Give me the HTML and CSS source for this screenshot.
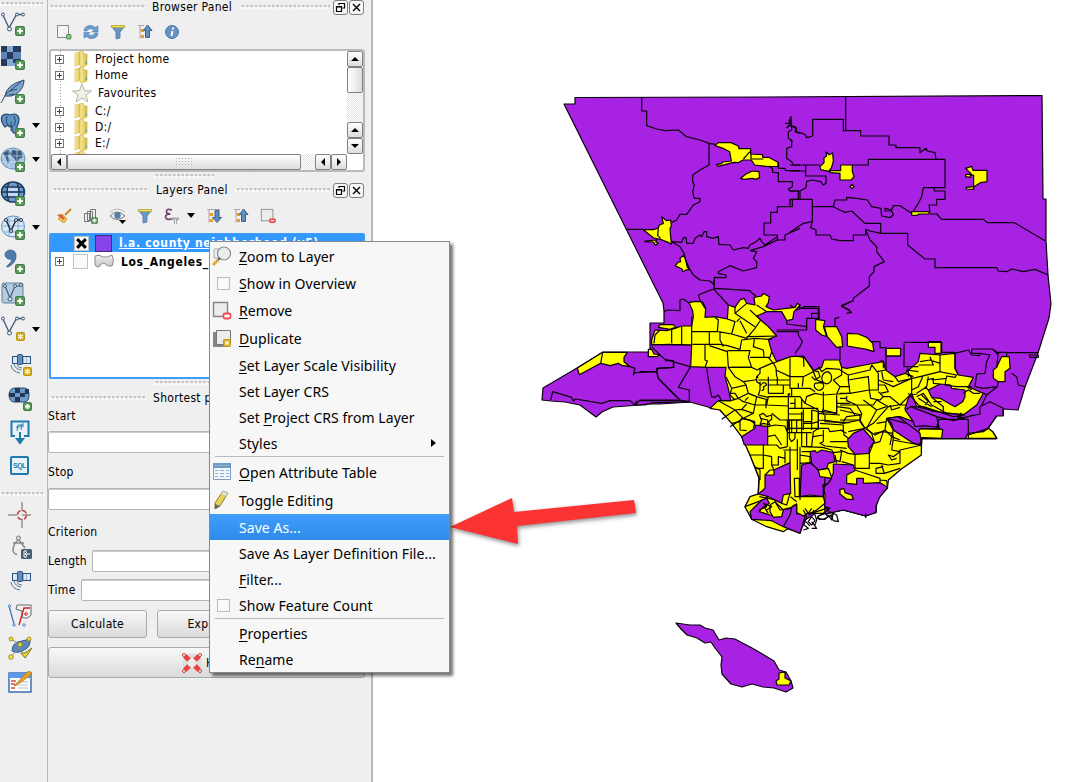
FILE: index.html
```html
<!DOCTYPE html>
<html lang="en">
<head>
<meta charset="utf-8">
<title>QGIS</title>
<link rel="stylesheet" href="styles.css">
</head>
<body>
<svg width="0" height="0" class="defs">
  <defs>
    <linearGradient id="gold" x1="0" x2="1"><stop offset="0" stop-color="#fbf0a8"/><stop offset="1" stop-color="#d9b93c"/></linearGradient>
    <linearGradient id="grayfill" x1="0" y1="0" x2="0" y2="1"><stop offset="0" stop-color="#f0f0f0"/><stop offset="1" stop-color="#c4c4c4"/></linearGradient>
    <symbol id="plus" viewBox="0 0 9 9"><rect x=".5" y=".5" width="8" height="8" rx="1.500" fill="#5c9a5c" stroke="#3f7d45"/><path d="M4.500 2v5M2 4.500h5" stroke="#fff" stroke-width="1.800"/></symbol>
    <symbol id="star" viewBox="0 0 9 9"><rect x=".5" y=".5" width="8" height="8" rx="1" fill="#d3ad1b" stroke="#b8940f"/><path d="M4.500 1.800v5.400M2 3l5 3M2 6l5-3" stroke="#fff" stroke-width="1.100"/></symbol>
    <symbol id="vee" viewBox="0 0 24 20"><path d="M2 3L8 16 15.500 2.500H22" fill="none" stroke="#3d5a75" stroke-width="1.300"/><g fill="#e6eef5" stroke="#3d5a75"><circle cx="2" cy="2.500" r="1.500"/><circle cx="8.500" cy="17" r="2"/><circle cx="16" cy="2.500" r="1.500"/><circle cx="22" cy="2.500" r="1.500"/></g></symbol>
    <symbol id="sat" viewBox="0 0 24 24"><g stroke="#2c5078" fill="#dbe8f5"><rect x="2.500" y="4.500" width="18" height="7"/><path d="M13.500 5v6M16.500 5v6" stroke="#9cb8d2"/><rect x="7.500" y="2.500" width="5" height="10" rx="1" fill="#6291bf"/></g><path d="M1 13q1 7 9 8M4 12q1 5 7 6M7 13q1 3 5 3" fill="none" stroke="#51779c"/></symbol>
    <symbol id="folder" viewBox="0 0 14 16"><path d="M1 2l5-1 1 12-6 2z" fill="url(#gold)" stroke="#d7bb56" stroke-width=".6"/><path d="M6 0h3l1 3h3v11L8 16 6 15z" fill="url(#gold)" stroke="#caa83b" stroke-width=".6"/><path d="M12.200 10v3" stroke="#4f9cc3"/></symbol>
    <symbol id="funnel" viewBox="0 0 16 16"><path d="M1 2h14L10 8v6l-4 1V8z" fill="#6a96c4" stroke="#4e7aa9" stroke-width=".8"/><path d="M1.500 1.500h13v2h-13z" fill="#f3e04a" stroke="#b8a531" stroke-width=".7"/></symbol>
    <symbol id="tree-up" viewBox="0 0 16 16"><path d="M1 1.500h6M3 2v12.500M3 6h3M3 13h3" stroke="#a8a8a8" fill="none"/><path d="M4.500 5.500h2v2h-2zM4.500 11.500h2v2h-2z" fill="#ffb74a" stroke="#ef8a12"/><path d="M10.500 1L15 6.500h-2.500v7h-4v-7H6.500z" fill="#5f8dbb" stroke="#31567f" stroke-width=".9"/></symbol>
    <symbol id="tree-down" viewBox="0 0 16 16"><path d="M1 1.500h13M3 2v12.500M3 6h3M3 13h3" stroke="#a8a8a8" fill="none"/><path d="M4.500 5.500h2v2h-2zM4.500 11.500h2v2h-2z" fill="#ffb74a" stroke="#ef8a12"/><path d="M11 14.500L6.500 9.500H9v-7h4v7h2.500z" fill="#5f8dbb" stroke="#31567f" stroke-width=".9"/></symbol>
    <symbol id="float" viewBox="0 0 15 15"><rect x=".5" y=".5" width="14" height="14" rx="2.500" fill="#f7f7f7" stroke="#7d7d7d"/><path d="M6 5V3.500h5.500V8H9.500M3.500 6.500h5v5h-5zM3.500 7h5M6 3.500h5.500" fill="none" stroke="#000" stroke-width="1.200"/></symbol>
    <symbol id="close" viewBox="0 0 15 15"><rect x=".5" y=".5" width="14" height="14" rx="2.500" fill="#f7f7f7" stroke="#7d7d7d"/><path d="M4 4l7 7M11 4l-7 7" stroke="#000" stroke-width="1.400"/></symbol>
    <symbol id="box-minus" viewBox="0 0 18 18"><rect x="1.500" y="1.500" width="13" height="13" fill="#ececec" stroke="#8d8d8d"/><rect x="10.500" y="12" width="7" height="4.500" rx="1.500" fill="#ee4b52" stroke="#d93b42" stroke-width=".6"/><path d="M12 14.200h4" stroke="#fff" stroke-width="1.200"/></symbol>
  </defs>
</svg>

<main class="window">
  <nav class="tools">
    <div class="grip"></div>
    <div class="tool"><svg viewBox="0 0 26 26"><use href="#vee" x="1" y="2" width="24" height="20"/><use href="#plus" x="15" y="16" width="10" height="10"/></svg></div>
    <div class="tool"><svg viewBox="0 0 26 26"><path d="M1 2h20v20H1z" fill="#84a9d4"/><path d="M1 2h6v6H1zM13 2h8v6h-8zM7 8h6v7H7zM1 15h6v7H1zM13 15h8v4h-8z" fill="#263c5c"/><path d="M13 8h8v7h-8zM1 8h6v7H1z" fill="#5b84b8"/><use href="#plus" x="15" y="16" width="10" height="10"/></svg></div>
    <div class="tool"><svg viewBox="0 0 26 26"><path d="M5 18Q6 7 24 2q0 9-8 14-4 3-11 2z" fill="#7fa5ce" stroke="#2a4a6b"/><path d="M1 25L6 16 21 4M9 17l5-1M10 13l7-2" fill="none" stroke="#2a4a6b"/><use href="#plus" x="15" y="16" width="10" height="10"/></svg></div>
    <div class="tool"><svg viewBox="0 0 26 26"><path d="M2 4q3-3 8-1 7-3 9 3 0 6-2 8v6q-3 3-5-1v-5q-3 2-4-1l-3 2Q0 9 2 4z" fill="#5f93c4" stroke="#27496d" stroke-width="1.200"/><path d="M7 4q-2 6 1 10M14 4q3 5 0 10M11 10v9" fill="none" stroke="#27496d"/><use href="#plus" x="15" y="16" width="10" height="10"/></svg><i class="drop"></i></div>
    <div class="tool"><svg viewBox="0 0 26 26"><ellipse cx="13" cy="12.500" rx="12" ry="10.500" fill="#a9c7e5" stroke="#6686a8"/><path d="M3 7l6-3 2 4-3 2 2 5-2 3-2-6zM12 4l9 1 2 6-4 2-2 4-3-5-3-2z" fill="#3c5d82"/><path d="M1 10h24M2 16h22M9 2v21M17 2v21" stroke="#d0e0ef" stroke-width=".6"/><use href="#plus" x="15" y="16" width="10" height="10"/></svg><i class="drop"></i></div>
    <div class="tool"><svg viewBox="0 0 26 26"><ellipse cx="13" cy="12" rx="11.500" ry="10" fill="#6d9dcc" stroke="#203a5d" stroke-width="1.500"/><path d="M8 7.500h10v3.500H8zM8 13h10v3.500H8z" fill="#c6daee"/><path d="M2 12h22M4 7h18M4 17h18M9 2.500Q5 12 9 21.500M17 2.500q4 9.500 0 19" fill="none" stroke="#203a5d" stroke-width="1.500"/><use href="#plus" x="15" y="16" width="10" height="10"/></svg></div>
    <div class="tool"><svg viewBox="0 0 26 26"><ellipse cx="13" cy="12.500" rx="11.500" ry="10.500" fill="#d8e8f7" stroke="#5f8cba"/><path d="M2 12h22M4 7h18M4 18h18M9 2v21M18 2v21" stroke="#86aed5" fill="none"/><path d="M6 6l5 11 5-11h5" fill="none" stroke="#1d2e40" stroke-width="1.500"/><g fill="#fff" stroke="#1d2e40"><circle cx="6" cy="6" r="1.500"/><circle cx="11" cy="17" r="1.500"/><circle cx="16" cy="6" r="1.500"/><circle cx="21" cy="6" r="1.500"/></g><use href="#plus" x="15" y="16" width="10" height="10"/></svg><i class="drop"></i></div>
    <div class="tool"><svg viewBox="0 0 26 26"><path d="M10 2q6 0 6 6 0 7-8 11-2 0-1-1 5-4 5-7-6 1-7-4 0-4 5-5z" fill="#4c7bac" stroke="#2f5c8c" stroke-width=".8"/><use href="#plus" x="15" y="16" width="10" height="10"/></svg></div>
    <div class="tool"><svg viewBox="0 0 26 26"><rect x="2" y="1" width="21" height="20" rx="2" fill="#b4cbe0" stroke="#627f9e"/><path d="M5 4l5 12 5-12h6" fill="none" stroke="#3d5a75" stroke-width="1.200"/><g fill="#e6eef5" stroke="#3d5a75"><circle cx="5" cy="4" r="1.500"/><circle cx="10" cy="17" r="2"/><circle cx="15" cy="4" r="1.500"/><circle cx="21" cy="3" r="1.500"/></g><use href="#plus" x="15" y="14" width="10" height="10"/></svg></div>
    <div class="tool"><svg viewBox="0 0 26 26"><use href="#vee" x="1" y="0" width="24" height="20"/><use href="#star" x="16" y="16" width="9" height="9"/></svg><i class="drop"></i></div>
    <div class="tool in gap"><svg viewBox="0 0 26 26"><use href="#sat" x="2" y="0" width="24" height="24"/><use href="#star" x="15" y="15" width="9" height="9"/></svg></div>
    <div class="tool in"><svg viewBox="0 0 26 26"><path d="M1 8q1-6 6-6h9q5 0 5 7 0 7-5 7H6q-5 0-5-8z" fill="#6e9bc9" stroke="#294a70"/><path d="M7 2h5v5H7zM1 7h6v4H1zM12 7h5v4h-5zM7 11h5v5H7zM17 3h4v5h-4z" fill="#223854"/><use href="#plus" x="15" y="16" width="9" height="9"/></svg></div>
    <div class="tool in"><svg viewBox="0 0 26 26"><path d="M7 16H3.500V1.500h17V16H16" fill="#e9f4fa" stroke="#1e7bab" stroke-width="2"/><path d="M12 12v7M9 19h6l-3 4z" fill="#1e7bab" stroke="#1e7bab" stroke-width="2"/><path d="M9 11l1-6h3M8 7h4M13 10l1-6h2M12 6h4" stroke="#1e7bab" fill="none"/></svg></div>
    <div class="tool in"><svg viewBox="0 0 26 26"><rect x="3" y="4" width="17" height="17" rx="1" fill="#e9f4fa" stroke="#1e7bab" stroke-width="2"/><text x="5" y="15" font-size="7" class="sql">SQL</text></svg></div>
    <div class="grip second"></div>
    <div class="tool in"><svg viewBox="0 0 26 26"><path d="M0 13h9M14 13h9M14 0v9M14 17v9" stroke="#666"/><circle cx="14" cy="13" r="4.500" fill="none" stroke="#bd4b4b" stroke-width="1.500" stroke-dasharray="5 2"/></svg></div>
    <div class="tool in"><svg viewBox="0 0 26 26"><path d="M10 5Q5 9 5 16q2 4 4 3M11 5l6 8M5 8h11" fill="none" stroke="#888" stroke-width="1.500"/><circle cx="10.500" cy="3" r="2" fill="#ddd" stroke="#777"/><rect x="13" y="14" width="11" height="10" rx="1.500" fill="#425f72"/><path d="M19 16h-3v6h3M22 19h-5M19 17l-2 2 2 2" fill="none" stroke="#fff"/></svg></div>
    <div class="tool in"><svg viewBox="0 0 26 26"><use href="#sat" x="2" y="0" width="24" height="24"/></svg></div>
    <div class="tool in"><svg viewBox="0 0 26 26"><path d="M9 2h14v10q-4 5-9 2V8L8 6z" fill="#f3f3f3" stroke="#666"/><path d="M1 3l5 18" stroke="#4e7fbc" stroke-width="1.400"/><path d="M11 22l5-17h6" fill="none" stroke="#d51e1e" stroke-width="1.400"/><g fill="#fff" stroke="#4e7fbc"><circle cx="1.500" cy="3" r="1.200"/><circle cx="6" cy="22" r="1.200"/><circle cx="16" cy="22" r="1.200"/></g><circle cx="18" cy="11" r="1.300" fill="#fff" stroke="#d51e1e"/></svg></div>
    <div class="tool in"><svg viewBox="0 0 26 26"><path d="M4 15q0-9 10-10l8-2q1 8-6 11-6 4-12 1z" fill="#5c86b8" stroke="#385e8e"/><path d="M3 3l10 6L3 21M13 9l8-6" fill="none" stroke="#888"/><path d="M13 17l4 5 7-10-7 5z" fill="#f2de24" stroke="#79702c"/><g fill="#f5df31" stroke="#a28f24"><circle cx="3" cy="3" r="2"/><circle cx="12" cy="8.500" r="2"/><circle cx="21" cy="3" r="2"/><circle cx="3" cy="21" r="2.300"/></g></svg></div>
    <div class="tool in"><svg viewBox="0 0 26 26"><rect x="1" y="3" width="22" height="19" fill="#fff" stroke="#2d65ad" stroke-width="1.400"/><path d="M1 3h22v5H1z" fill="#5c99e8"/><path d="M3 11h5M3 14h4M3 18h4" stroke="#d24848" stroke-width="1.600"/><path d="M10 12h10M10 15h10M10 18h10" stroke="#b7bccd"/><path d="M6 16L19 2q5-2 4 3L9 15z" fill="#e2a02f" stroke="#ac7017" stroke-width=".7"/></svg></div>
  </nav>

  <section class="dock">
    <header class="title first"><span class="dots"></span><h2 class="tb">Browser Panel</h2><span class="dots"></span><svg class="wb" viewBox="0 0 15 15"><use href="#float"/></svg><svg class="wb" viewBox="0 0 15 15"><use href="#close"/></svg></header>
    <div class="bar browser">
      <svg viewBox="0 0 16 16"><rect x="1.500" y="1.500" width="11" height="12" fill="#f4f4f4" stroke="#8c8c8c"/><rect x="10.500" y="10.500" width="4.500" height="4.500" rx="1" fill="#8fc08f" stroke="#4b8b4f"/></svg>
      <svg viewBox="0 0 16 16"><path d="M1 7q0-5 6-5.500 4 0 5 2L15 2v6H9l2-2Q6 3 4 7zM15 9q0 5-6 5.500-4 0-5-2L1 14V8.500h6l-2 2q5 2.500 7-1.500z" fill="#6d9dd0" stroke="#4b7eb5" stroke-width=".6"/></svg>
      <svg viewBox="0 0 16 16"><use href="#funnel"/></svg>
      <svg viewBox="0 0 16 16"><use href="#tree-up"/></svg>
      <svg viewBox="0 0 16 16"><circle cx="8" cy="8" r="6.500" fill="#6691c4" stroke="#4676ab"/><path d="M9 3.500v2M8.500 7L7.500 12" stroke="#fff" stroke-width="1.900"/></svg>
    </div>
    <div class="files">
      <div class="file-list">
        <div class="file"><i class="expander"></i><svg viewBox="0 0 14 16"><use href="#folder"/></svg>Project home</div>
        <div class="file"><i class="expander"></i><svg viewBox="0 0 14 16"><use href="#folder"/></svg>Home</div>
        <div class="file fav"><svg viewBox="0 0 20 20"><path d="M10 1l2.500 6.500 7 .5-5.500 4 2 7-6-4-6 4 2-7L.5 8l7-.5z" fill="#efefe6" stroke="#b5b5a3"/></svg>Favourites</div>
        <div class="file"><i class="expander"></i><svg viewBox="0 0 14 16"><use href="#folder"/></svg>C:/</div>
        <div class="file"><i class="expander"></i><svg viewBox="0 0 14 16"><use href="#folder"/></svg>D:/</div>
        <div class="file"><i class="expander"></i><svg viewBox="0 0 14 16"><use href="#folder"/></svg>E:/</div>
        <div class="file"><i class="expander"></i><svg viewBox="0 0 14 16"><use href="#folder"/></svg>F:/</div>
      </div>
      <div class="vscroll"><b class="sb up"></b><b class="thumb"></b><span></span><b class="sb up"></b><b class="sb down"></b></div>
      <div class="hscroll"><b class="sb left"></b><b class="thumb"><i></i></b><span></span><b class="sb left"></b><b class="sb right"></b></div>
    </div>
    <div class="split"></div>
    <header class="title"><span class="dots"></span><h2 class="tl">Layers Panel</h2><span class="dots"></span><svg class="wb" viewBox="0 0 15 15"><use href="#float"/></svg><svg class="wb" viewBox="0 0 15 15"><use href="#close"/></svg></header>
    <div class="bar layerbar">
      <svg viewBox="0 0 16 16"><path d="M15 1L9 7" stroke="#c08b27" stroke-width="2"/><path d="M6 6l5 5-3 4-6-4z" fill="#f2c94c" stroke="#b98a24" stroke-width=".7"/><path d="M1 7l4-1 4 4-2 2z" fill="#d9653e"/></svg>
      <svg viewBox="0 0 16 16"><path d="M1.500 5.500h5v8h-5zM4.500 3.500h5v9h-5zM7.500 1.500h5v11h-5z" fill="#eee" stroke="#777"/><use href="#plus" x="8" y="9" width="7" height="7"/></svg>
      <svg viewBox="0 0 16 16"><path d="M0 8q7-8 15 0-8 7-15 0z" fill="#e8eef3" stroke="#777"/><circle cx="7.500" cy="7.500" r="3.200" fill="#557fa9"/><path d="M0 4q7-6 15 0" fill="none" stroke="#bbb"/><path d="M9 12h7l-3.500 4z"/></svg>
      <svg viewBox="0 0 16 16"><use href="#funnel"/></svg>
      <svg viewBox="0 0 16 16"><path d="M8 2Q2 0 2.500 4q0 2 4 2-5 0-5 3 1 4 7 1.500" fill="none" stroke="#70426f" stroke-width="1.700"/><path d="M8 9.500h7v2L13 13v3h-3v-3l-2-1.500z" fill="#aaa"/><path d="M11.500 11v5" stroke="#eee"/></svg>
      <i class="drop"></i>
      <svg viewBox="0 0 16 16"><use href="#tree-down"/></svg>
      <svg viewBox="0 0 16 16"><use href="#tree-up"/></svg>
      <svg viewBox="0 0 16 16"><use href="#box-minus"/></svg>
    </div>
    <div class="layers">
      <div class="layer sel"><span class="chk on"><svg viewBox="0 0 12 12"><path d="M2 2l8 8M10 2l-8 8" stroke="#000" stroke-width="2.800"/></svg></span><span class="swatch"></span><u>l.a. county neighborhood (v5)</u></div>
      <div class="layer"><i class="expander"></i><span class="chk"></span><svg class="poly" viewBox="0 0 20 15"><path d="M1 2q4-2 8 1 4 1 9-2 3 6 0 11-5 1-8-3-3 0-5 4-5 0-4-5z" fill="url(#grayfill)" stroke="#8b8b8b"/></svg>Los_Angeles_</div>
    </div>
    <div class="split"></div>
    <header class="title path"><span class="dots"></span><h2>Shortest path</h2></header>
    <form class="form">
      <label class="l1">Start</label><div class="field"></div>
      <label class="l2">Stop</label><div class="field"></div>
      <label class="l3">Criterion</label>
      <div class="pair"><label>Length</label><div class="field"></div></div>
      <div class="pair"><label>Time</label><div class="field"></div></div>
      <div class="buttons"><div class="btn">Calculate</div><div class="btn">Export</div><div class="btn"></div></div>
      <div class="btn help"><svg viewBox="0 0 20 20"><circle cx="10" cy="10" r="7" fill="none" stroke="#ddd" stroke-width="5"/><path d="M3 3l4 4M17 3l-4 4M3 17l4-4M17 17l-4-4" stroke="#ea4545" stroke-width="5"/><g fill="#fff" stroke="#c83c3c"><circle cx="2" cy="2" r="1.500"/><circle cx="18" cy="2" r="1.500"/><circle cx="2" cy="18" r="1.500"/><circle cx="18" cy="18" r="1.500"/></g></svg>Help</div>
    </form>
  </section>

  <svg class="map" viewBox="373 0 715 782">
    <path class="p" d="M564 104H575V97.500L760 97 1042 95.500 1043 199H1046V241L1048 275 1051 304 1049 318 1038 353 1025 387 1018 410 1003 409V416H997L988 428 993 432 997 438.500H922L921 455 901 469 888 480 887 488 877 500 876 512 866 516 843 510 828 513 820 509 813 515 805 520 800 533 783 527 772 521 752 519 745 507 750 497 758 494 759 478 750 455 742 437 732 423 720 410 708 407 690 402 660 404 647 404 640 405 613 407 602 412 596 417 580 405 565 402 551 401 542 400 543 388 577 368 603 352H650V323H664V311L663 303 654 285Z"/>

    <!-- northern districts, west half -->
    <g transform="translate(530 85) scale(.33333)">
      <path class="y" d="M555 182l10-9 38 0 22 10 2 8 35 0 0 16 36 2 0 8 18 0 28 15 0 12-30 1-40-5-10-15-25 0-15 8-14-1-22 6-24 6-5-5 15-3 5-5 25-3-5-28-20-10zM632 280l15-12 20-10 20 2 2 18-12 5-10-3-25 3zM340 434l30 0 15-5 3-9 12-5-5-20 15 12 12-2 2 18-4 8 4 47-8-5-25-10-20-4zM345 468l35-3-3 6 8 4-8 6-7-10-25-1zM450 520l12-10 5 15 5 22 6 6-10 2-10 5-2-8-20-10 8-10 8-2z"/>
      <path class="l" d="M335 37V78H350V122L380 132 405 137 445 135 470 155 510 165 537 175 555 178M537 175V240L510 255 488 270V290L493 300 488 320 493 340H510V350L490 360 470 388H450L440 405 425 412M288 433H340M385 430L383 452 392 460M640 222L660 200M663 207V222L700 222M718 243L728 252 728 262 745 263V290H787V305L775 312 780 318H805V343H787V365H742V382H722V414H702V450H742V465H765V450L810 430M745 232V250H765L767 257H810M785 95L778 105V120L770 128 785 118V135L775 140V160L785 165V185L770 190V220L785 230 790 240H810M765 115H785L780 100M790 122L800 130 795 140 810 145M425 470L450 485 462 505 467 525 478 550 490 570M425 470L455 472 460 458 468 458 470 475 490 475 495 460 510 450 515 455 522 440 530 440 530 455 550 460 565 455 567 478 600 480 610 495 640 488 655 490 660 480 678 470 690 460 695 470 705 480 742 455M660 497L700 485 742 465M660 497L680 500 670 520 680 530 680 548 640 558 600 542 565 560 565 565 588 570 588 578 553 577V600L540 588 510 585 490 570"/>
    </g>

    <!-- northern districts, east half -->
    <g transform="translate(790 85) scale(.33333)">
      <path class="y" d="M90 245l12-12 0-15 8-5-2-12 10 8 10-5 2 25-6 20-8 10-24-5zM120 257h32v-17h35l0 20 5 15-8 10h-34v-20l-30-2zM180 305l6-7 6 7-6 6zM527 250l18-6 4 12h42v34l-20 3-20 13v7l-22-1v-5l22-2v-35l-10 2 0 5-14-2v-7l18 0zM365 380h52v7l-30 0-5 4h-17z"/>
      <path class="l" d="M167 34V137H160V103H68V153L50 158 45 148 20 140 15 128 0 122M160 137H212V153H297V180H318V188H390V203L408 190 412 198 435 203 438 222M187 240H235V223H465V308H400L395 335 385 355 370 378M433 308V318H465V343H440V360H417L420 382M0 240H90M0 258H47V273H108V295L100 300 92 290 65 285 50 290 48 308 30 318V343M47 240V273M0 318H30M0 362V343H67V365H130L150 375 165 382 185 378 225 415H272V445H353V480L405 522H435V548H620L625 558 650 560 665 552 700 560 735 553 775 570M67 365V410L40 415 0 442M67 410L62 428 78 435V450H120L125 462 150 467H190V450H227V433L240 438 272 445M130 365L135 345 170 345V337L200 340 232 345 245 365 273 370 275 393 300 398 310 390 305 378 285 378 285 370 305 375 310 362 330 362 365 385M420 387H440L455 403H580L592 413H673L765 467M228 437L240 465 260 485V500L283 530 252 545V560L238 575V603L190 640V647L155 662 185 682 170 685M0 660L20 675 45 665H87V690M0 95L5 105 0 112M0 165L8 170"/>
    </g>

    <!-- metropolitan area; nested groups shift to the eastern and southern sheets -->
    <g transform="translate(640 280) scale(.33333)">
      <path class="y" d="M147 68L165 64 188 66 197 85 195 112 225 110 262 117 265 75 285 82 300 60 312 55 320 70 345 75 342 52 365 48 370 40 388 50 385 68 378 80 400 90 440 85 465 82 472 70 480 75 462 95 458 118 440 122 425 95 380 95 350 108 362 120 385 140 410 168 385 178 395 215 410 245 452 230 490 228 520 272 545 262 552 240 598 240 605 262 620 265 690 252 730 245 737 270 765 290 795 280 835 245 840 220 900 225 945 220 945 265 955 285 1000 292 985 320 1030 340 1010 375 970 405 950 402 890 395 830 380 815 340 805 355 795 385 820 425 780 410 740 415 760 450 820 485 844 495 844 525 783 568 745 600 742 625 708 660 708 695 677 708 610 690 565 700 500 700 480 720 430 755 380 740 335 718 315 680 330 650 355 642 358 595 330 525 305 470 275 430 240 390 210 385 235 362 272 362 265 325 255 290 258 262 200 262 152 260 155 195 35 193 35 180 45 150 80 152 105 145 125 138 155 138 160 110 158 92Z"/>
      <path class="y" d="M527 118L555 122 550 140 560 170 545 165 527 150ZM553 140H590L605 170 608 200 590 202 575 185 562 170ZM55 142L60 134H100L108 142 90 148ZM25 208H35L42 222 60 225 50 230H25Z"/>
      <path class="l" d="M32 195L85 193 155 195M35 200L60 225 75 238 150 260M72 95L82 90 120 92V60L130 57 147 68M60 150L45 165 42 190M95 145V190M105 145H95M125 140V193M155 110V195M155 155H208V193M158 193H240L262 197 300 208 305 180 345 175 385 178M225 112L235 120 232 155H208M235 155L275 162 285 125 262 117M275 162L320 175 345 145 362 120M240 155V180L250 200M285 82V100L345 140M285 100L320 70M300 115L290 125M300 122L320 160M330 90L360 118M350 75L380 95M320 170L410 168M208 197L262 215 265 262M195 195V240L202 243 195 262M262 212H330L325 232 335 262H265M330 232H390L395 215M385 232L400 250 410 245M335 262L352 270 360 265 400 248M343 178L340 200 370 210 372 230M175 45L180 60 195 85M175 45L225 25M222 0V28L265 75M225 25L330 32 335 38 348 48M200 262L205 300 215 350 225 352 235 345 245 362 272 362M152 260L115 322 148 330V365L120 360 75 315 55 295 50 275 55 265 100 262V242H75M0 275H50M0 362H120L150 366M480 75L478 85H535V115H500V150H410M440 122V132L500 140M515 115V100H535M410 155H475V165L487 185 480 200 465 220M395 178L385 178M535 85L538 118M585 138V115L598 112M600 200V240M630 65L605 80 630 90"/>
      <path class="l" d="M265 262L285 290 310 305 318 315 275 325M258 290L275 325M310 305L345 300 355 290M360 265V280L350 290V305L365 315M275 262L335 262M400 248L408 265 410 290M355 300H450V235M408 270L450 290H490L520 275M490 228L492 260M490 228L515 262 530 300 550 308M465 228L490 232M385 290V340M385 315H450V290M430 315V340H385M412 290V315M450 290V325H510L525 335M490 290L487 320M455 325V350M475 310V325M360 305L360 330 355 345 385 352M275 325L270 345 285 360M318 315L325 340 295 355 272 362M295 355L285 340 270 340M325 340L350 350 345 375 310 365 295 355M325 352L315 362M350 350L385 360M365 310Q378 305 380 315L370 320Q375 330 365 332M235 362L285 390 245 418M285 390L305 388 320 372M285 390L310 415 270 440M305 388L340 400 345 375M310 415L340 400M385 350H445L450 340M385 350L380 375 445 378M445 340V450M465 355V385M485 355V385M445 385H535M445 350H480L495 370M445 402H490M445 420H490V388M465 385V370H450M490 395V450M515 390V450M535 390V450M490 430H515M440 445H535M495 370L500 350 525 340M495 370L535 390M345 375L378 375M378 360V385M358 405L370 400 380 410 395 405 395 418 385 425 390 435 370 430 360 435 365 420ZM310 415L330 420 345 432M525 310A14 14 0 1 0 551 315Q550 308 540 308ZM545 295Q548 275 565 275 580 285 572 305 560 318 548 305ZM520 272L535 275 540 290 525 300 515 290M550 335L550 390 590 400M525 340L550 345M590 345V400M550 345L590 342 630 340M605 262V285L580 300 600 320 590 342M535 260L545 275 560 265 600 268M550 385L545 400M590 370H630M535 400L600 405M555 400V425L630 428M600 320H630"/>
      <g transform="translate(600 30)">
        <path class="y" d="M22 130L55 132 80 142 98 160 102 185 80 178 22 168ZM138 175H182V198H138ZM265 155H303V190H285V172H265ZM460 240L470 232 485 200 508 200 510 235 495 245 495 275H475L460 265ZM230 442L240 415 308 418 305 445ZM375 445L385 430 430 425 445 415 458 425 470 445Z"/>
        <path class="p" d="M265 300L300 282 332 285 335 295 375 300 375 320 368 335 345 350 335 345 300 325 275 322ZM142 385L175 380 240 430 244 467 215 457 160 420 155 400ZM195 360L212 350 290 380 297 412 250 407 225 410 220 395Z"/>
        <path class="l" d="M95 155H120V173H138V240M138 198L180 198M120 213H130V235M192 160V230L235 230M192 157H305V187H345V235L355 255M345 190L385 180 395 195 418 197 420 190 395 190 395 177H458L475 190V187H500M420 190L450 195 440 215 435 250 410 252 405 290 430 295 472 290M458 177L475 195M475 187L470 232M500 200V188H595M568 195H595V202H570ZM515 250L530 260 535 285 555 290M472 290L475 275M432 310L440 315 425 345M440 315L472 290M490 377V355L450 335 420 350 420 372 360 385M385 388H297L290 412M385 388V445M297 412V417H240M385 380L400 375M290 380L340 392 385 380M215 350L250 350 340 380 375 375M470 377L445 415 385 435M244 447H470M355 375V388M362 368V388M348 372H370M352 382H370"/>
        <path class="l" d="M0 240L25 255 90 240 95 225M25 255V270L85 260 88 300 30 310 25 270M30 310H0M20 318V332L50 345H100L110 330M88 300H115V250L95 225M115 270L160 290 215 265 215 310 180 345 150 320 130 320 115 305M88 300L92 325 120 330 130 320M137 240L110 245M125 245L130 270 160 275M115 285L135 285 145 305 120 310M165 260L175 275 240 260 300 245V195M215 265L200 240 235 245M205 235V260M195 250L220 260M240 215L270 210 300 220M235 225L280 225 270 200M248 260L235 290 215 300M265 260L260 290 230 310M298 245L350 255 345 262 320 258 315 285 350 290 395 290M275 270L320 265M260 270L280 265 280 280 300 282M255 290L265 300M230 320L250 310 275 345 320 370 350 372M235 325L275 350M245 315L265 335 255 345M275 322L310 350 310 362M205 310L235 345 280 365M210 315L232 312M280 335L305 335M370 310L385 300 400 310 420 310M380 290L395 300M110 330L145 350 100 400 75 415M145 350L175 345 200 345M150 345L155 360 180 352M50 345L65 370 60 395 75 415M0 360L65 375M0 390H60M75 415L25 425M75 415L105 435 135 420 140 385M135 420L155 440 150 465M160 420L155 440 180 450M0 420L20 430M0 345L50 345M0 325H20M110 400L140 395M235 465L245 455"/>
      </g>
      <g transform="translate(180 360)">
        <path class="p" d="M125 110L165 85 165 75 203 80V135H133ZM443 118L460 100 490 87 523 125 508 145 508 160 465 163 445 140ZM330 155L345 152 350 158 365 150 400 158 405 185 385 190 380 205 355 210 335 190ZM305 195L330 188 345 200 355 212 360 230 395 235 385 250 370 262V290L330 285 300 290ZM400 192L460 195 465 212 440 225V250L470 253V235H490V250L540 248 563 262 540 290 528 318V338L497 348 430 330 375 342 374 315 375 285 368 255 385 250 400 220ZM222 210L270 188 272 280 250 285 245 310 205 290 175 282 195 265V225H222ZM150 335L185 300 200 295 208 310 185 325 178 335 210 345 245 350V330L275 322 290 312 290 338 315 350 300 400 250 380 215 362 155 358Z"/>
        <path class="y" d="M420 268L432 266 435 278 455 285 460 298 440 298 420 282ZM210 315L225 305 250 330 245 350 220 352 210 335Z"/>
        <path class="w" d="M355 348L375 340 385 348 375 358 357 358ZM325 365L335 350 345 362 335 375ZM388 350L400 340 395 360Z"/>
        <path class="l" d="M262 60V140M262 60H305M305 35V140M262 98H335M275 60V98M290 60V98M268 60V115L275 125 285 115V98M320 100V140M335 30L355 35V85L340 95 335 140H305M335 30V60M310 65H335M335 70L355 65M340 110L370 105M355 35H370M355 60L385 62 430 70 480 60V45L440 50 430 65M370 45V35L410 40V0M410 20L450 25 465 45M355 85H385L390 95 430 90 432 105 445 115M430 90L430 75 360 70M370 90V125L360 130 375 138 440 145M390 125L445 125M305 140L368 142 395 150 400 158M300 140V300M292 118V210M250 150H292M255 153V190M270 140V188M262 140L240 145 230 135H203M203 80L225 75 255 78 262 98M203 110L225 105 245 135M203 80V60L180 55M190 135V165H150M190 165V205H165M190 165L215 170V195H235V170L255 175M165 200L180 210V240M195 225L210 210 222 210M215 195L222 210M300 190L330 188V170L300 165M305 155H330M283 235H298V290H285ZM272 290L290 305M290 290H370L375 310 350 330 330 340M245 310L260 315 270 280M355 210L385 205 395 232M400 158L425 155 420 185 405 180M420 150L445 160 465 163 465 205H508V160M425 185L460 195M508 160L520 130 540 125 550 95 578 100 580 115 575 150 600 155 580 170 565 165 575 180 590 175M508 190L540 190 565 195 600 190 600 150 665 135M550 200L528 205V220L553 220 545 195M465 210L510 225 540 235V250M540 240L560 242 562 258M553 220L600 205M500 85L530 30 560 20M523 125L515 100 500 85M523 100L550 95M560 55L620 70M480 60L495 85M530 30L490 0M578 120L660 135M95 70L120 65 125 55 165 65M120 65V90L140 92M165 65L160 85M215 40L240 60 262 60M135 320L175 305 205 290M178 290L225 300 245 310M225 305L240 330 275 325 270 345 250 380M275 320L290 312 290 345M178 330L200 320 190 310 215 320 200 330M195 325L205 340M310 330L320 350 312 375 325 385 310 390M315 325L325 340 335 325M325 345L350 335 380 325 390 340M335 365L350 385 335 385M340 330L350 360 345 375M355 348L375 340 385 350 370 358 352 355ZM390 335L410 345 415 365 400 362 395 350 385 345M375 320L390 325 370 340M318 365L330 378M497 340V355M405 165L410 190M375 235L370 290"/>
      </g>
    </g>

    <!-- Malibu coast -->
    <g transform="translate(530 280) scale(.33333)">
      <path class="y" d="M142 264L218 217H292L282 232V245L300 260 275 256 265 250 240 257 212 250 148 284Z"/>
      <path class="l" d="M218 217L212 250M300 260L315 265 310 285 315 278 380 275V265L432 262 430 242 405 240M380 275L385 295 440 352M62 360L68 335 125 352 130 363 137 357 215 370 240 362 300 362 315 375 330 360H445M320 362L315 375 345 375 370 368 480 366"/>
    </g>

    <!-- Santa Catalina -->
    <path class="p" d="M676 623L690 625 700 625 705 628 713 630 719 640 726 638 735 639 752 648 764 655 774 661 779 670 786 672 791 681 793 688 786 692 774 688 763 687 752 684 742 687 731 684 722 674 721 665 722 657 715 648 711 642 705 643 697 638 687 635 681 629Z"/>
    <path class="y" d="M779 673L785 672 785 678 791 681 789 685 777 685 776 681 779 679Z"/>

    <path class="arrow" d="M450 527L512 498 514 512 634 500 636 513 517 526 518 544Z"/>
  </svg>
</main>

<menu class="context">
  <li class="h28"><svg viewBox="0 0 22 22"><path d="M3 4h10v9H3z" fill="#eee" stroke="#aaa"/><circle cx="13" cy="8.500" r="6.500" fill="#e8edef" fill-opacity=".85" stroke="#8c8c8c" stroke-width="1.200"/><path d="M9 13l-2 2" stroke="#555" stroke-width="2"/><path d="M7 15l-5 5" stroke="#e0ad32" stroke-width="3"/></svg><span><u>Z</u>oom to Layer</span></li>
  <li><b class="box"></b><span><u>S</u>how in Overview</span></li>
  <li class="h28"><svg viewBox="0 0 22 22"><path d="M2.500 3.500h14v14h-14z" fill="#ececec" stroke="#868686" stroke-width="1.400"/><rect x="12.500" y="14.500" width="7" height="5" rx="1.500" fill="#fff" stroke="#ee4b52" stroke-width="1.800"/></svg><span><u>R</u>emove</span></li>
  <li class="h28"><svg viewBox="0 0 22 22"><path d="M2 5h15v15H2z" fill="#858585"/><path d="M5.500 3.500h14v14h-14z" fill="#ececec" stroke="#777"/><use href="#star" x="12" y="12" width="8" height="8"/></svg><span><u>D</u>uplicate</span></li>
  <li><span><u>S</u>et Layer Scale Visibility</span></li>
  <li><span>Set Layer CRS</span></li>
  <li><span>Set <u>P</u>roject CRS from Layer</span></li>
  <li><span>Styles</span><i class="sub"></i></li>
  <hr>
  <li class="h28"><svg viewBox="0 0 22 22"><path d="M2.500 2.500h17v16h-17z" fill="#f2f7fc" stroke="#7c9dbf"/><path d="M2 2h18v5H2z" fill="#719ac4"/><path d="M4 9.500h3M4 12.500h3M4 15.500h3M9 9.500h4M9 12.500h4M9 15.500h4M15 9.500h3M15 12.500h3M15 15.500h3M4 4.500h14" stroke="#8fb0d0" stroke-width="1.200"/></svg><span><u>O</u>pen Attribute Table</span></li>
  <li class="h28"><svg viewBox="0 0 22 22"><path d="M4 14L12 2l5 2L9 17l-5 3z" fill="#ead454" stroke="#8b7c3c"/><path d="M12 2l5 2-2 3-5-2z" fill="#ddd"/><path d="M4 15l5 2-5 3z" fill="#666"/></svg><span>Toggle Editing</span></li>
  <li class="active"><span>Save As...</span></li>
  <li><span>Save As Layer Definition File...</span></li>
  <li><span><u>F</u>ilter...</span></li>
  <li><b class="box"></b><span>Show Feature Count</span></li>
  <hr>
  <li><span><u>P</u>roperties</span></li>
  <li><span>Re<u>n</u>ame</span></li>
</menu>
</body>
</html>
```
FILE: styles.css
```css
* { box-sizing: border-box; }
body { margin: 0; width: 1088px; height: 782px; overflow: hidden; background: #fff; color: #000; font: 12px "DejaVu Sans Condensed", "Noto Sans", sans-serif; letter-spacing: .3px; }
.defs { display: block; }
.window { display: flex; height: 782px; overflow: hidden; }

/* left tool strip */
.tools { width: 48px; flex: none; background: #efefef; border-right: 1px solid #b8b8b8; display: flex; flex-direction: column; }
.grip, .split, .dots {
  height: 5px;
  background-image: radial-gradient(circle at 3px 1px, #c4c4c4 1px, transparent 1.300px), radial-gradient(circle at 1px 3px, #fff 1px, transparent 1.300px);
  background-size: 4.320px 5px;
}
.grip { width: 44px; flex: none; margin: 2px 0 -1px; }
.grip.second { margin: 9px 0 .5px; }
.tool { height: 34px; flex: none; display: flex; align-items: center; gap: 6px; }
.tool svg { width: 26px; height: 26px; flex: none; }
.tool.in { height: 33.700px; padding-left: 8px; }
.tool.gap { margin-top: 2.500px; }
.sql { font: bold 7px "Liberation Sans", sans-serif; fill: #1e7bab; letter-spacing: -.5px; }
.drop { width: 0; height: 0; border: 4.500px solid transparent; border-top: 5px solid #000; border-bottom: 0; }

/* docked panels */
.dock { width: 325px; flex: none; background: #efefef; border-right: 2px solid #b8b8b8; display: flex; flex-direction: column; padding-right: 6px; }
.title { height: 16px; flex: none; display: flex; align-items: center; margin-top: 2px; padding: 0 1px 0 4px; }
.title.first { margin-top: -1px; padding-left: 1px; }
.title h2 { font: inherit; margin: 0; padding: 0 7px 0 8px; white-space: nowrap; }
.title .tb { padding: 0 8px 0 6px; }
.dots { flex: 0 0 96px; }
.first .dots:first-child { flex-basis: 97px; }
.wb { width: 15px; height: 15px; margin-left: 1px; flex: none; }
h2 + .dots { flex: 1; margin-right: 2px; }
.bar { display: flex; align-items: center; flex: none; padding-left: 8px; gap: 11px; }
.bar svg { width: 16px; height: 16px; flex: none; }
.browser { height: 34px; }
.layerbar { height: 35px; }
.layerbar .drop { margin: 0 -.5px 0 -4px; }
.files { height: 123px; flex: none; margin-left: 1px; border: 2px solid #bababa; border-radius: 3px; background: #fff; display: grid; grid-template: 103px 16px / 296px 16px; }
.file-list { overflow: hidden; background: repeating-linear-gradient(#999 0 1px, transparent 1px 3px) 9px 0 / 1px 100% no-repeat; }
.file { height: 16px; display: flex; align-items: center; padding-left: 4px; white-space: nowrap; }
.file svg { width: 14px; height: 16px; margin: 0 7px 0 10px; }
.file.fav { height: 20px; }
.file.fav svg { width: 20px; height: 20px; margin: 0 6px 0 17px; }
.expander { width: 9px; height: 9px; flex: none; border: 1px solid #777; background: linear-gradient(#444, #444) center / 5px 1px no-repeat, linear-gradient(#444, #444) center / 1px 5px no-repeat, #fff; }
.sb, .thumb { border: 1px solid #808080; border-radius: 2px; background: linear-gradient(#fff, #ddd); display: grid; place-items: center; }
.sb { width: 16px; height: 16px; flex: none; }
.sb::after { content: ""; border: 4px solid transparent; }
.up::after { border-top: 0; border-bottom-color: #000; }
.down::after { border-bottom: 0; border-top-color: #000; }
.left::after { border-left: 0; border-right-color: #000; }
.right::after { border-right: 0; border-left-color: #000; }
.vscroll, .hscroll { display: flex; background: repeating-conic-gradient(#e4e4e4 0 25%, #fff 0 50%) 0 0 / 2px 2px; }
.vscroll { flex-direction: column; }
.vscroll .thumb { height: 26px; background: linear-gradient(90deg, #fff, #ddd); }
.vscroll span, .hscroll span { flex: 1; }
.hscroll .thumb { width: 234px; }
.thumb i { width: 19px; height: 10px; background: radial-gradient(circle, #aaa 35%, transparent 45%) 0 0 / 3px 3px; }
.split { width: 60px; flex: none; margin: 2px 0 1px 106px; }
.layers { height: 146px; flex: none; margin-left: 1px; border: 2px solid #3f9bf8; border-top-width: 1px; border-radius: 2px; background: #fff; }
.layer { height: 19px; display: flex; align-items: center; font-weight: bold; letter-spacing: .65px; padding-left: 23px; white-space: nowrap; overflow: hidden; }
.layer.sel { height: 18px; background: #3399ff; color: #fff; }
.layer .expander { margin: 0 9px 0 -19px; }
.chk { width: 15px; height: 15px; flex: none; border: 1px solid #c3c3c3; background: #fafafa; }
.chk svg { display: block; }
.swatch { width: 17px; height: 17px; margin: 0 7px 0 6px; flex: none; background: #8643ea; border: 1px solid #4b2788; }
.poly { width: 20px; height: 15px; margin: 0 7px 0 6px; flex: none; }
.title.path { height: 18px; margin: 2px 0 0; padding-left: 2px; }
.path h2 { padding-left: 7px; }
.form { display: flex; flex-direction: column; margin: 0; }
.form label { line-height: 17px; }
.l1 { margin-top: 1px; }
.field { height: 22px; background: #fff; border: 1px solid #b5b5b5; border-radius: 2px; box-shadow: inset 0 1px #ccc; flex: 1 0 22px; }
.l1 + .field { margin-top: 6px; }
.l2 { margin-top: 11px; }
.l2 + .field { margin-top: 7px; }
.l3 { margin: 14px 0 9px; }
.pair { display: flex; align-items: center; gap: 5px; margin-bottom: 7px; }
.buttons { display: flex; gap: 10px; margin: 2px 0 9px; }
.btn { width: 99px; height: 28px; flex: none; border: 1px solid #ababab; border-radius: 3px; background: linear-gradient(#f8f8f8, #dadada); display: grid; place-items: center; }
.buttons .btn:nth-child(2) { width: 98px; }
.btn.help { width: auto; height: 31px; display: flex; align-items: center; gap: 4px; padding-left: 133px; }
.btn.help svg { width: 20px; height: 20px; }

/* map canvas */
.map { width: 715px; height: 782px; flex: none; }
.p, .y, .l, .w { stroke: #090009; stroke-width: 1.200px; vector-effect: non-scaling-stroke; stroke-linejoin: round; }
.p { fill: #a722e3; }
.y { fill: #ff0; }
.w { fill: #fff; }
.l { fill: none; }
.arrow { fill: #fb3433; filter: drop-shadow(1px 2px 2px rgba(0, 0, 0, .45)); }

/* layer context menu */
.context { position: absolute; left: 209px; top: 241px; width: 241px; height: 432px; margin: 0; padding: 0; border: 1px solid #888; background: #f7f7f7; box-shadow: 3px 3px 3px rgba(0, 0, 0, .55); list-style: none; font: 14px "Noto Sans", sans-serif; letter-spacing: .06px; }
.context li { height: 26px; display: grid; grid-template-columns: 29px 1fr 18px; align-items: center; white-space: nowrap; }
.context .h28 { height: 28px; }
.context svg { width: 22px; height: 22px; margin-left: 1px; grid-column: 1; }
.context li span { grid-column: 2; grid-row: 1; }
.context u { text-underline-offset: 2px; }
.context hr { height: 1px; margin: 0 5px 1px; border: 0; background: #bbb; }
.context .active { background: linear-gradient(#419dfb, #2f8bea); color: #fff; }
.box { width: 13px; height: 13px; margin-left: 7px; border: 1px solid #bbb; background: #fafafa; }
.sub { grid-column: 3; grid-row: 1; width: 0; height: 0; border: 4px solid transparent; border-left: 5px solid #000; border-right: 0; }
```
